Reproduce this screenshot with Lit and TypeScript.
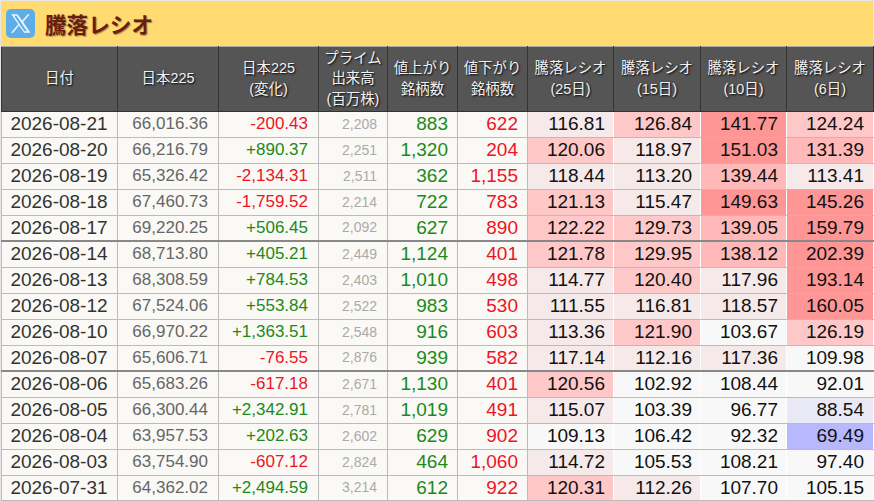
import { LitElement, html, css, svg } from "lit";
import { customElement } from "lit/decorators.js";

const rows: string[][] = [
  ["2026-08-21","66,016.36","-200.43","2,208","883","622","116.81","126.84","141.77","124.24"],
  ["2026-08-20","66,216.79","+890.37","2,251","1,320","204","120.06","118.97","151.03","131.39"],
  ["2026-08-19","65,326.42","-2,134.31","2,511","362","1,155","118.44","113.20","139.44","113.41"],
  ["2026-08-18","67,460.73","-1,759.52","2,214","722","783","121.13","115.47","149.63","145.26"],
  ["2026-08-17","69,220.25","+506.45","2,092","627","890","122.22","129.73","139.05","159.79"],
  ["2026-08-14","68,713.80","+405.21","2,449","1,124","401","121.78","129.95","138.12","202.39"],
  ["2026-08-13","68,308.59","+784.53","2,403","1,010","498","114.77","120.40","117.96","193.14"],
  ["2026-08-12","67,524.06","+553.84","2,522","983","530","111.55","116.81","118.57","160.05"],
  ["2026-08-10","66,970.22","+1,363.51","2,548","916","603","113.36","121.90","103.67","126.19"],
  ["2026-08-07","65,606.71","-76.55","2,876","939","582","117.14","112.16","117.36","109.98"],
  ["2026-08-06","65,683.26","-617.18","2,671","1,130","401","120.56","102.92","108.44","92.01"],
  ["2026-08-05","66,300.44","+2,342.91","2,781","1,019","491","115.07","103.39","96.77","88.54"],
  ["2026-08-04","63,957.53","+202.63","2,602","629","902","109.13","106.42","92.32","69.49"],
  ["2026-08-03","63,754.90","-607.12","2,824","464","1,060","114.72","105.53","108.21","97.40"],
  ["2026-07-31","64,362.02","+2,494.59","3,214","612","922","120.31","112.26","107.70","105.15"],
];
const weekEnd = new Set([4, 9]);

function heat(v: number): string {
  if (v >= 140) return "h5";
  if (v >= 130) return "h4";
  if (v >= 120) return "h3";
  if (v >= 110) return "h2";
  if (v >= 90) return "h1";
  if (v >= 80) return "c1";
  return "c2";
}

@customElement("app-root")
export class AppRoot extends LitElement {
  static styles = css`
    :host { display: block; width: 874px; height: 501px; overflow: hidden; background: #e6e6e6;
      font-family: "Liberation Sans", "Noto Sans CJK JP", sans-serif; }
    .wrap { padding: 1px 1px 0 1px; }
    .title { height: 45px; background: #ffdb72; display: flex; align-items: center; gap: 10px; padding-left: 5px; }
    .logo { width: 29px; height: 29px; border-radius: 5px; background: #5dade8; display: flex; align-items: center; justify-content: center; }
    .title h1 { margin: 0; font-size: 21.6px; font-weight: bold; color: #6b1d0f; text-shadow: 1px 1px 1px #a08a50; letter-spacing: 0; }
    table { border-collapse: collapse; table-layout: fixed; width: 872px; background: #faf9f6; }
    th { height: 63px; padding: 0 0 1px; background: #555; color: #f2f2f2; font-weight: normal; font-size: 14.4px; line-height: 20.5px;
      text-shadow: 1px 1px 2px #000; border: 1px solid #333; border-top-color: #aaa; text-align: center; }
    td { height: 24px; padding: 0 9px 1px 0; border: 1px solid #bbb; text-align: right; font-size: 19px; line-height: 24px; color: #111; white-space: nowrap; }
    td.date { text-align: center; padding: 0 1px 1px 0; color: #333; }
    td.price { font-size: 17px; color: #666; padding-right: 10px; }
    td.chg { font-size: 17px; padding-right: 10px; }
    td.vol { font-size: 14px; color: #aaa; padding-right: 10px; }
    .up { color: #1a8a1a; }
    .down { color: #ee1425; }
    td.ratio { background-clip: padding-box; border-left-color: #fff; border-right-color: #fff; padding-right: 8px; }
    td.ratio:last-child { padding-right: 9px; }
    tr.week td { border-bottom: 2px solid #888; height: 23px; line-height: 23px; }
    tbody tr:last-child td { height: 23px; line-height: 23px; }
    .h1 { background-color: #f8f8f8; }
    .h2 { background-color: #f6e9e9; }
    .h3 { background-color: #ffc8c8; }
    .h4 { background-color: #ffb9b9; }
    .h5 { background-color: #ff9696; }
    .c1 { background-color: #e9e9f6; }
    .c2 { background-color: #b8b8ff; }
  `;

  private xIcon() {
    return svg`<svg width="21" height="21" viewBox="0 0 24 24"><path fill="#eef6fd" fill-rule="evenodd" d="M1.5 1.5h7.2l5.2 7.3 6.3-7.3h2.4l-7.6 8.8 8.3 12.2h-7.2l-5.7-8.1-6.9 8.1H1.1l8.3-9.6zM4.7 3.1l11.8 17.8h2.9L7.5 3.1z"/></svg>`;
  }

  render() {
    const widths = [116, 101, 100, 69, 70, 70, 86, 87, 86, 87];
    const heads = [["日付"],["日本225"],["日本225","(変化)"],["プライム","出来高","(百万株)"],["値上がり","銘柄数"],["値下がり","銘柄数"],["騰落レシオ","(25日)"],["騰落レシオ","(15日)"],["騰落レシオ","(10日)"],["騰落レシオ","(6日)"]];
    return html`<div class="wrap">
      <div class="title"><div class="logo">${this.xIcon()}</div><h1>騰落レシオ</h1></div>
      <table>
        <colgroup>${widths.map(w => html`<col style="width:${w}px">`)}</colgroup>
        <thead><tr>${heads.map(h => html`<th>${h.map((l, i) => html`${i ? html`<br>` : ""}${l}`)}</th>`)}</tr></thead>
        <tbody>${rows.map((r, i) => html`<tr class=${weekEnd.has(i) ? "week" : ""}>
          <td class="date">${r[0]}</td>
          <td class="price">${r[1]}</td>
          <td class="chg ${r[2][0] === "+" ? "up" : "down"}">${r[2]}</td>
          <td class="vol">${r[3]}</td>
          <td class="up">${r[4]}</td>
          <td class="down">${r[5]}</td>
          ${r.slice(6).map(v => html`<td class="ratio ${heat(parseFloat(v))}">${v}</td>`)}
        </tr>`)}</tbody>
      </table>
    </div>`;
  }
}
